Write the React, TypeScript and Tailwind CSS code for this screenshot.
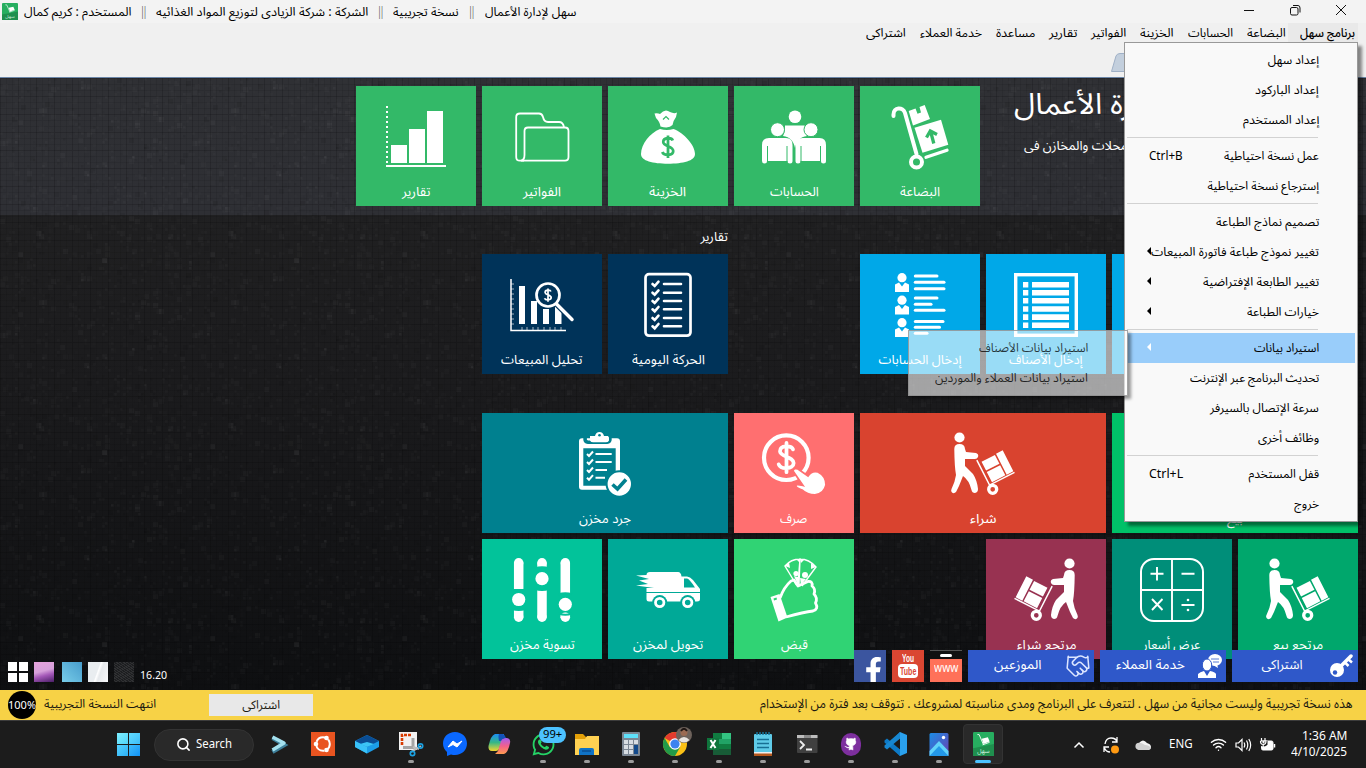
import { useLayoutEffect, useRef, useState, type ReactNode } from "react";
import { Github, Wifi, Search, Handshake } from "lucide-react";
import { FaFacebookF, FaWhatsapp } from "react-icons/fa";

/** Text stretched or squeezed horizontally to a known width. */
function Fit({ w, children, className = "", ltr = false }: { w: number; children: ReactNode; className?: string; ltr?: boolean }) {
  const ref = useRef<HTMLSpanElement>(null);
  const [scale, setScale] = useState(1);
  useLayoutEffect(() => {
    if (ref.current && ref.current.offsetWidth) setScale(w / ref.current.offsetWidth);
  }, [w]);
  return (
    <span className={`inline-flex shrink-0 ${className}`} style={{ width: w }}>
      <span
        ref={ref}
        className={`inline-block shrink-0 whitespace-nowrap ${ltr ? "origin-left" : "origin-right"}`}
        style={{ transform: `scaleX(${scale})` }}
      >
        {children}
      </span>
    </span>
  );
}

const Svg = ({ children }: { children: ReactNode }) => (
  <svg viewBox="0 0 64 64" className="h-16 w-16 overflow-visible" fill="none" stroke="none">
    {children}
  </svg>
);

const DOLLAR = "M5 -6 C4 -9 -5 -9.500 -5 -4.500 C-5 0 5.500 -0.500 5.500 4.500 C5.500 9.500 -4.500 9.500 -6 5.500 M0 -11 V11.500";

const Trolley = () => (
  <Svg>
    <path d="M5.500 11V9.500C5.500 2 15 1.500 17 8L28.500 49" stroke="#fff" strokeWidth="4" strokeLinecap="round" />
    <circle cx="28.500" cy="57" r="5.500" stroke="#fff" strokeWidth="4" />
    <path d="M38 52.300L59 45.300" stroke="#fff" strokeWidth="3.300" strokeLinecap="round" />
    <path d="M26.500 22.700L53 14.700L60.300 39.700L34.500 47.700Z" fill="#fff" />
    <path d="M20.700 6L27.500 3.500L29.500 8.800L33 7.500L31.500 2L36.700 0L42 14L25 20.500Z" fill="#fff" />
    <path d="M45.800 38.500L42.500 26M38.500 32.500L42.300 26L49 29.500" stroke="#33b968" strokeWidth="3.300" />
  </Svg>
);

const People = () => (
  <Svg>
    <path d="M23 20.500H42.500C45 24 44 30 45 31C38 31.500 34 37 33 43C32 37 28 31.500 21 31C23 27 23 24 23 20.500Z" fill="#fff" />
    <g fill="#fff">
      <circle cx="33" cy="11.700" r="6.300" />
      <circle cx="15.500" cy="24.700" r="7" stroke="#33b968" />
      <circle cx="49" cy="24.700" r="7" stroke="#33b968" />
      <path d="M7 33H24Q30.500 33 30.500 40V56Q30.500 58.500 28 58.500T25.500 56H5Q5 58.500 2.500 58.500T0 56V40Q0 33 7 33Z" />
      <path d="M40.500 33H57.500Q64 33 64 40V56Q64 58.500 61.500 58.500T59 56H38.500Q38.500 58.500 36 58.500T33.500 56V40Q33.500 33 40.500 33Z" />
    </g>
    <path d="M5.500 41V57M25 41V57M39 41V57M58.500 41V57" stroke="#33b968" />
  </Svg>
);

const Bag = () => (
  <Svg>
    <path d="M18.500 8.500Q22 8 24 9Q29 3 34 7Q38 9 41 7.500L40 12Q37 16 36.500 20Q33 24 24.500 21.500Q24 17 20 13Z" fill="#fff" />
    <path d="M27 14.500L30 11.500L33 14.500" stroke="#33b968" strokeWidth="1.200" />
    <path d="M24 24Q31 26 37.500 24C48 28 59 40 59 49C59 56 47 58.700 32 58.700S5 56 5 49C5 39 14 28 24 24Z" fill="#fff" />
    <path d={DOLLAR} transform="translate(32 41.500) scale(.95 1)" stroke="#33b968" strokeWidth="2.900" />
  </Svg>
);

const Folder = () => (
  <Svg>
    <g stroke="#fff" strokeWidth="1.800">
      <path d="M14 55.700H10Q6.200 55.700 6.200 52V12Q6.200 8.500 10 8.500H29Q32 8.500 33 12Q34 17 38 17H49Q53 17 54 22" />
      <path d="M11 55.700Q14.500 55 14.500 50V26Q14.500 22.500 18 22.500H55Q58.500 22.500 58.500 26V52Q58.500 55.700 55 55.700Z" />
    </g>
  </Svg>
);

const Bars = () => (
  <Svg>
    <path d="M3 1V58" stroke="#fff" strokeWidth="2" strokeDasharray="2 3" />
    <path d="M7 40H23V58H7ZM25 24H41V58H25ZM43 6H59V58H43ZM2 60H62V62H2Z" fill="#fff" />
  </Svg>
);

const TableList = () => (
  <Svg>
    <rect x="1.700" y="1.700" width="60.600" height="60.600" stroke="#fff" strokeWidth="3.400" />
    {[9, 17, 25, 33.200, 41.300, 49.500].map((y) => (
      <path key={y} d={`M9 ${y}h5.300v5.600h-5.300zM18 ${y}h37v5.600h-37z`} fill="#fff" />
    ))}
  </Svg>
);

const ContactList = () => (
  <Svg>
    {[[3, 49], [9.300, 56], [15.700, 56], [25, 49], [31.300, 43], [37.300, 56], [48.600, 55], [54.300, 51.500], [60.300, 39]].map(([y, x]) => (
      <path key={y} d={`M27.300 ${y}H${x}`} stroke="#fff" strokeWidth="3" strokeLinecap="round" />
    ))}
    {[0, 22.500, 45].map((y) => (
      <g key={y} transform={`translate(0 ${y})`}>
        <circle cx="14" cy="4.700" r="4.600" fill="#fff" />
        <path d="M7 19V11.500L11 9.500L14 13.500L17 9.500L21 11.500V19Z" fill="#fff" />
      </g>
    ))}
  </Svg>
);

const Checklist = () => (
  <Svg>
    <rect x="9.500" y="1.200" width="45" height="61.500" rx="3.500" stroke="#fff" strokeWidth="2.700" />
    {[11, 19.700, 28, 36.300, 45, 53.300].map((y) => (
      <path key={y} d={`M16.500 ${y}L18.700 ${y + 2}L22.500 ${y - 2.300}M28 ${y}H45`} stroke="#fff" strokeWidth="2.600" strokeLinecap="round" />
    ))}
  </Svg>
);

const Analysis = () => (
  <Svg>
    <path d="M1 6V57.500H56" stroke="#fff" strokeWidth="1.500" />
    <path d="M1 11H4M1 16H4M1 21H4M1 26H4M1 31H4M1 36H4M1 41H4M1 46H4M1 51H4M12 57V54M17 57V54M23 57V54M28 57V54M34 57V54M40 57V54M45 57V54M51 57V54" stroke="#fff" strokeWidth=".8" opacity=".8" />
    <path d="M9 13H15V51H9ZM21 28H27V51H21ZM33 36H39V51H33ZM45 33H51.500V51H45Z" fill="#fff" />
    <path d="M46.500 31L62 46.500" stroke="#003359" strokeWidth="6" />
    <path d="M46.500 31L62 46.500" stroke="#fff" strokeWidth="3.500" strokeLinecap="round" />
    <circle cx="38" cy="22" r="11.500" stroke="#fff" strokeWidth="2.700" fill="#003359" />
    <path d={DOLLAR} transform="translate(38 22) scale(.58)" stroke="#fff" strokeWidth="3" />
  </Svg>
);

const Clipboard = () => (
  <Svg>
    <path fillRule="evenodd" d="M9 6.300H44Q47 6.300 47 9.300V57.700H9Q6 57.700 6 54.700V9.300Q6 6.300 9 6.300ZM10.300 16.300V53.700H42.700V16.300Z" fill="#fff" />
    <path d="M15 3.500H22Q23 0 26.500 0T31 3.500H35Q37 4 37 7T34 10.300H15Q12 10 12 7T15 3.500Z" stroke="#00808f" strokeWidth="3.500" />
    <path d="M17 4H22Q23 0 26.500 0T31 4H35Q36 5 36 7T34 10H19Q17 9 17 7T17 4Z" fill="#fff" />
    <path d="M20 7.300H33" stroke="#fff" strokeWidth="6" strokeLinecap="round" />
    <circle cx="26.500" cy="3.300" r="1.300" fill="#00808f" />
    {[[22, 38.700], [30, 38.700], [38, 34], [45.700, 32]].map(([y, x]) => (
      <path key={y} d={`M14 ${y}l2 2l4-4.500M22.500 ${y}H${x}`} stroke="#fff" strokeWidth="2" />
    ))}
    <circle cx="46.300" cy="52" r="12.700" fill="#fff" stroke="#00808f" strokeWidth="2" />
    <path d="M39.500 52.500L44.500 57L53 47.500" stroke="#00808f" strokeWidth="3.600" />
  </Svg>
);

const PayHand = () => (
  <Svg>
    <circle cx="24.300" cy="25.700" r="22.300" stroke="#fff" strokeWidth="4.200" />
    <path d={DOLLAR} transform="translate(24.500 25.200) scale(1.300)" stroke="#fff" strokeWidth="2.900" strokeLinecap="round" />
    <path d="M31 39Q32 35.500 36 37L46 44Q50 38 56 40Q64 44 64 53Q62 62 53 63Q45 63 40 58Q33 56 34 53Q35 52 41 53.500Z" fill="#fff" stroke="#ff6f70" strokeWidth="1.800" />
  </Svg>
);

const Sliders = () => (
  <Svg>
    <g stroke="#fff" strokeWidth="9.500">
      <path d="M8.700 4.500V31M8.700 52V59.500M32 4.500V10M32 31V59.500M55.300 4.500V36M55.300 57V60" />
    </g>
    <g fill="#fff">
      <circle cx="8.700" cy="41.500" r="6.600" /><circle cx="32" cy="20.700" r="6.600" /><circle cx="55.300" cy="46.300" r="6.600" />
      <circle cx="8.700" cy="4.750" r="4.750" /><circle cx="32" cy="4.750" r="4.750" /><circle cx="55.300" cy="4.750" r="4.750" />
      <circle cx="8.700" cy="59.200" r="4.750" /><circle cx="32" cy="59.200" r="4.750" /><circle cx="55.300" cy="59.200" r="4.750" />
    </g>
    <path d="M2 31.500Q8.700 33.500 15.500 31.500M2 51Q8.700 53 15.500 51M25 10.300Q32 8 39 10.300M25 31Q32 33 39 31M48.500 36.300Q55.300 34 62 36.300M48.500 55.500Q55.300 58 62 55.500" stroke="#02c39a" strokeWidth="2" />
  </Svg>
);

const Van = () => (
  <Svg>
    <path d="M10.500 17Q10.500 14 14 14H42Q45 14 45.500 18.500H51Q54 18.500 57 22L64 31V41Q64 43.500 61 43.500H13Q10.500 43.500 10.500 41V30H18L0 27.500L12 26L3 22.500L13 21L0 17.500Z" fill="#fff" />
    <path d="M48 20.500H51Q53 20.500 59 29.500H48Z" fill="#00a997" />
    <path d="M10 34.500H64" stroke="#00a997" strokeWidth="1.200" />
    {[23.700, 51.700].map((x) => (
      <g key={x}><circle cx={x} cy="44.500" r="7.500" fill="#00a997" /><circle cx={x} cy="44.500" r="4.200" stroke="#fff" strokeWidth="2.800" /></g>
    ))}
  </Svg>
);

const CashFist = () => (
  <Svg>
    <path d="M34.500 27L23 8Q29 1 38 1L37 26M36 26L38 1Q47 1 54 9L40 28" stroke="#fff" strokeWidth="1.400" />
    <path d="M23 8L27 4L28 10ZM34 1H38V5ZM38 1H43L39 5ZM54 9L49 5L49 11Z" fill="#fff" />
    <circle cx="34" cy="15.500" r="2.600" fill="#fff" /><circle cx="43" cy="17" r="3" fill="#fff" />
    <path d="M32 18L36 19L36 27ZM38 20L44 21L39 27Z" fill="#fff" />
    <path d="M18 40Q22 29 29 23L32 22L36 28L46 23.500Q51 23 50 28Q54 31 52 36Q56 40 53.500 45Q57 51 51 53Q42 54 24 59" stroke="#fff" strokeWidth="2.800" strokeLinejoin="round" />
    <path d="M8.500 39L17.500 36L25.500 59.500L16.500 63.500Z" fill="#fff" />
    <path d="M11.500 40.500L14.500 39.500L15 41.500L12 42.500Z" fill="#30d374" />
  </Svg>
);

const ManCart = ({ flip = false }: { flip?: boolean }) => (
  <Svg>
    <g transform={flip ? "translate(64 0) scale(-1 1)" : undefined}>
      <circle cx="8.500" cy="5.500" r="5.100" fill="#fff" />
      <path d="M3.300 17Q3.300 12 8.500 12T14 17L15 20L25 21Q28 22 27 25Q26 27.500 23 27L14 27V34L22 42Q26 48 27 57Q27 60.500 24 61Q21 61 20.500 58Q18 48 12 44L8 54L5 60Q3 62 1 60.500Q-.5 59 .5 57Q4 50 5 43Q3.500 35 3.300 17Z" fill="#fff" />
      <g transform="translate(39 54) rotate(-27)">
        <path d="M0 -29V-1H28" stroke="#fff" strokeWidth="1.500" />
        <path d="M3.500 -25.500H18.500V-15.500H3.500ZM3.500 -14H18.500V-2.500H3.500ZM20 -26H27.500V-2.500H20Z" fill="#fff" />
      </g>
      <circle cx="41.700" cy="57.300" r="4" stroke="#fff" strokeWidth="3.300" />
    </g>
  </Svg>
);

const Calc = () => (
  <Svg>
    <rect x="1" y="1" width="62" height="62" rx="13" stroke="#fff" strokeWidth="2" />
    <path d="M32 1V63M1 32H63M10.500 15.700H23.500M17 9V22.500M41.500 15.700H54.500M12 41L22.500 52M22.500 41L12 52M41.500 47H54.500" stroke="#fff" strokeWidth="1.900" />
    <circle cx="48" cy="42" r="1.300" fill="#fff" /><circle cx="48" cy="52" r="1.300" fill="#fff" />
  </Svg>
);

function Tile({ bg, label, w = 0, icon, span = false }: { bg: string; label?: string; w?: number; icon?: ReactNode; span?: boolean }) {
  return (
    <div className={`flex h-[120px] flex-col items-center pt-[19px] text-white ${bg} ${span ? "col-span-2" : ""}`}>
      <div className="h-16 w-16">{icon}</div>
      {label && <Fit w={w} className="mt-[11px] h-6 items-center text-[13px] leading-6">{label}</Fit>}
    </div>
  );
}

/** Woven texture of the window background, from a repeatable pseudo-random sequence. */
const CELLS = (() => {
  let s = 7;
  const rnd = () => (s = (s * 16807) % 2147483647) / 2147483647;
  return Array.from({ length: 900 }, () => {
    const z = rnd() > 0.7 ? 5 : 2.5;
    return [Math.floor(rnd() * 64) * 3, Math.floor(rnd() * 64) * 3, z, rnd() * 0.028, rnd() > 0.35 ? "#fff" : "#000"] as const;
  });
})();

const Texture = () => (
  <svg className="absolute inset-0 h-full w-full">
    <defs>
      <pattern id="weave" width="192" height="192" patternUnits="userSpaceOnUse">
        {CELLS.map(([x, y, z, o, c], i) => (
          <rect key={i} x={x} y={y} width={z} height={z} fill={c} opacity={c === "#000" ? o * 3 : o} />
        ))}
        {Array.from({ length: 32 }, (_, i) => (
          <path key={i} d={`M${i * 6 + 0.5} 0V192M0 ${i * 6 + 0.5}H192`} stroke="#000" opacity={i % 3 ? 0.08 : 0.16} />
        ))}
      </pattern>
    </defs>
    <rect width="100%" height="100%" fill="url(#weave)" />
  </svg>
);

const topMenu: [string, number][] = [
  ["البضاعة", 39], ["الحسابات", 45], ["الخزينة", 34], ["الفواتير", 35],
  ["تقارير", 28], ["مساعدة", 39], ["خدمة العملاء", 62], ["اشتراكى", 40],
];

type Item = { t: string; w: number; k?: string; arrow?: boolean; on?: boolean } | null;
const menu: Item[] = [
  { t: "إعداد سهل", w: 51 }, { t: "إعداد الباركود", w: 64 }, { t: "إعداد المستخدم", w: 76 }, null,
  { t: "عمل نسخة احتياطية", w: 95, k: "Ctrl+B" }, { t: "إسترجاع نسخة احتياطية", w: 112 }, null,
  { t: "تصميم نماذج الطباعة", w: 103 }, { t: "تغيير نموذج طباعة فاتورة المبيعات", w: 168, arrow: true },
  { t: "تغيير الطابعة الإفتراضية", w: 116, arrow: true }, { t: "خيارات الطباعة", w: 72, arrow: true }, null,
  { t: "استيراد بيانات", w: 65, arrow: true, on: true }, { t: "تحديث البرنامج عبر الإنترنت", w: 129 },
  { t: "سرعة الإتصال بالسيرفر", w: 109 }, { t: "وظائف أخرى", w: 61 }, null,
  { t: "قفل المستخدم", w: 71, k: "Ctrl+L" }, { t: "خروج", w: 25 },
];

function SahlLogo({ className }: { className: string }) {
  return (
    <svg viewBox="0 0 24 28" preserveAspectRatio="none" className={className}>
      <rect width="24" height="28" rx="1.500" fill="#27ae60" />
      <path d="M0 19L24 14V28H0Z" fill="#1f8f4e" />
      <path d="M5 3L7 3L12 15M11 15L19 12" stroke="#fff" fill="none" />
      <path d="M10 8L17 6L19 11L12 14Z" fill="#fff" />
      <text x="12" y="25" fontSize="7" textAnchor="middle" fill="#d7f3e1">سهل</text>
    </svg>
  );
}

const Sep = () => <Fit w={5} className="text-[12px] font-semibold text-[#222]">||</Fit>;

function FooterButton({ t, w, children }: { t: string; w: number; children: ReactNode }) {
  return (
    <div className="flex h-8 w-[126px] items-center bg-[#2f58c9] text-white">
      <div className="flex w-8 shrink-0 items-center justify-center">{children}</div>
      <div className="flex w-[88px] justify-center"><Fit w={w} className="text-[13px]">{t}</Fit></div>
    </div>
  );
}

function App_({ children, dot = true }: { children: ReactNode; dot?: boolean }) {
  return (
    <div className="relative flex h-12 w-11 shrink-0 flex-col items-center">
      <div className="flex h-[47px] items-center">{children}</div>
      {dot && <span className="absolute bottom-[6px] h-[3px] w-1.5 rounded-full bg-[#9b9b9b]" />}
    </div>
  );
}

const I = ({ children }: { children: ReactNode }) => (
  <svg viewBox="0 0 24 24" className="h-6 w-6 overflow-visible" fill="none">{children}</svg>
);

function Taskbar() {
  return (
    <div dir="ltr" className="flex h-12 items-center border-t border-[#3c3c3c] bg-[#1c1c1c] text-white">
      <div className="ml-[117px] grid h-[23px] w-[23px] grid-cols-2 gap-px">
        <span className="bg-gradient-to-br from-[#7df0ff] to-[#4fd3fa]" /><span className="bg-gradient-to-br from-[#62dcff] to-[#3cbcf8]" />
        <span className="bg-gradient-to-br from-[#55d2ff] to-[#2ab0f6]" /><span className="bg-gradient-to-br from-[#3dbbfb] to-[#0f92f5]" />
      </div>
      <div className="ml-3.5 flex h-8 w-[100px] items-center rounded-full border border-[#333] bg-[#292929] pl-[21px]">
        <Search className="h-[15px] w-[15px]" strokeWidth={2.5} />
        <Fit ltr w={36} className="ml-[5px] pt-px text-[12px]">Search</Fit>
      </div>
      <div className="ml-[3px] flex">
        <App_ dot={false}><I><path d="M6 5L18 12L6 19" stroke="#3d7e99" strokeWidth="4" transform="translate(-.5 1)" /><path d="M5.500 5L17 11L5.500 18" stroke="#a3e0ee" strokeWidth="3.500" strokeLinejoin="round" /></I></App_>
        <App_ dot={false}><I><path d="M0 0H24V24H0Z" fill="#e95420" /><circle cx="12" cy="12" r="6.800" stroke="#fff" strokeWidth="2" strokeDasharray="11.200 3" strokeDashoffset="5" /><circle cx="5" cy="12" r="2.300" fill="#fff" /><circle cx="15.500" cy="6" r="2.300" fill="#fff" /><circle cx="15.500" cy="18" r="2.300" fill="#fff" /></I></App_>
        <App_ dot={false}><I><path d="M0 9L12 3L24 9V15L12 21.500L0 15Z" fill="#1b9de8" /><path d="M12 3L24 9L12 15L0 9Z" fill="#0a4d94" /><path d="M12 10L19 12L12 15L5 12Z" fill="#3cc5f6" /><path d="M0 9L12 15V21.500L0 15Z" fill="#39c2f8" /></I></App_>
        <App_><I><path d="M0 0H18V18H0Z" fill="#f2f2f2" /><path d="M3 13V3H12" stroke="#d83b01" strokeWidth="2.600" strokeDasharray="3 1" /><path d="M4 15.500H14V6" stroke="#a5a5a5" strokeWidth="3" /><path d="M12 20L22 14M14 15L20 17" stroke="#bbb" strokeWidth="2" /><circle cx="21.500" cy="14" r="2.200" stroke="#1aa1e2" strokeWidth="1.700" /><circle cx="13.500" cy="21.500" r="2.200" stroke="#1aa1e2" strokeWidth="1.700" /></I></App_>
        <App_ dot={false}><I><path d="M12 0C5 0 0 5 0 11.500C0 15 1.500 18 4 20V24L8 22.500Q10 23 12 23C19 23 24 18 24 11.500S19 0 12 0Z" fill="#0a68ff" /><path d="M5 15L10 9L14 12L19 9L14 15L10 12.500Z" fill="#fff" stroke="#fff" strokeLinejoin="round" /></I></App_>
        <App_ dot={false}><I>
          <defs><linearGradient id="cpa" x2="0" y2="1"><stop stopColor="#1c8ff5" /><stop offset=".5" stopColor="#35b787" /><stop offset="1" stopColor="#f3d52e" /></linearGradient><linearGradient id="cpb" x2="0" y2="1"><stop stopColor="#a65cf0" /><stop offset=".5" stopColor="#f2608c" /><stop offset="1" stopColor="#ff9b4f" /></linearGradient></defs>
          <path d="M8 2H17L12 17Q11 19 9 19H5Q1 19 1.500 14Q4 3 8 2Z" fill="url(#cpa)" /><path d="M17 22H8L11 19L14 9Q15 6 18 6H20Q24 7 23 11Q21 21 17 22Z" fill="url(#cpb)" /><path d="M12 2H16Q18 3 19 6Q15 6 14 9L12 9Q11 4 12 2Z" fill="#1452b8" />
        </I></App_>
        <App_><div className="relative"><FaWhatsapp className="h-[25px] w-[25px] text-[#25d366]" /><span className="absolute -top-[5px] left-2 flex h-4 w-[27px] items-center justify-center rounded-full bg-[#4cc2ff] text-black"><Fit ltr w={19} className="text-[10px]">99+</Fit></span></div></App_>
        <App_><I><path d="M0 2H8L11 5H24V23H0Z" fill="#e3a008" /><path d="M0 7H10L12 4H24V23H0Z" fill="#ffd152" /><path d="M4 23V18Q4 16 6 16H17Q19 16 19 18V23Z" fill="#1073c6" /><path d="M7 19H16" stroke="#0a4e92" strokeWidth="1.500" /></I></App_>
        <App_><I><rect x="3" y="0" width="18" height="24" rx="1" fill="#7b8794" /><path d="M5 2H19V6H5Z" fill="#5ee0fa" /><path d="M5 8H9V12H5ZM10 8H14V12H10ZM15 8H19V12H15ZM5 13H9V17H5ZM10 13H14V17H10ZM5 18H9V22H5ZM10 18H14V22H10Z" fill="#d7dde3" /><path d="M15 13H19V22H15Z" fill="#124a8c" /></I></App_>
        <App_><I><circle cx="12" cy="12" r="12" fill="#fbc116" /><path d="M12 12L1.600 6A12 12 0 0 1 22.400 6Z" fill="#e33b2e" /><path d="M1.600 6A12 12 0 0 0 12 24L17.200 15L6.800 15Z" fill="#229a48" /><circle cx="12" cy="12" r="5.800" fill="#fff" /><circle cx="12" cy="12" r="4.600" fill="#3b82f0" /><circle cx="21" cy="3" r="8" fill="#6d625b" /><circle cx="21" cy="0.500" r="3.500" fill="#9a6a52" /><path d="M15.500 8Q21 2 26.500 8Q21 13 15.500 8" fill="#e8e4e0" /><path d="M18 -1Q21 -5.500 24 -1" stroke="#1d1512" strokeWidth="1.800" /></I></App_>
        <App_><I><path d="M6 1H24V23H6Z" fill="#21a366" /><path d="M6 1H15V7H6ZM6 12H24V17H6Z" fill="#107c41" /><path d="M15 1H24V7H15Z" fill="#33c481" /><path d="M6 17H24V23H6Z" fill="#185c37" /><path d="M0 6H12V18H0Z" fill="#0f753c" /><path d="M3.500 8L8.500 16M8.500 8L3.500 16" stroke="#fff" strokeWidth="2" /></I></App_>
        <App_><I><rect x="3" y="2" width="18" height="22" rx="1" fill="#5fcbe8" /><path d="M3 21H21V24H3Z" fill="#b5571c" /><path d="M3 20H21V21.500H3Z" fill="#eee" /><path d="M6 0V3M9 0V3M12 0V3M15 0V3M18 0V3" stroke="#16769c" strokeWidth="1.500" /><path d="M6 7.500H18M6 11.500H18M6 15.500H18" stroke="#176f94" strokeWidth="1.500" /></I></App_>
        <App_><I><rect x="2" y="3" width="20.500" height="18" rx="1" fill="#404040" /><path d="M2 3H22.500V6H2Z" fill="#bdbdbd" /><path d="M9 3H16V6H9Z" fill="#8a8a8a" /><path d="M5 9L9 13L5 17M11 17.500H17" stroke="#eee" strokeWidth="1.800" /></I></App_>
        <App_><span className="flex h-[23px] w-[20px] items-center justify-center rounded-full bg-[#7d2f9e]"><Github className="h-3.5 w-3.5 fill-white" strokeWidth={1.5} /></span></App_>
        <App_><I><path d="M17 0L24 3V21L17 24L6 12Z" fill="#2aa1ee" /><path d="M17 6L9 12L17 18Z" fill="#1c1c1c" /><path d="M1.500 8.500L4 6.500L17 17.500V24L1.500 10.500Z" fill="#0d7ac7" /><path d="M1.500 15.500L4 17.500L17 6.500V0L1.500 13.500Z" fill="#1787d1" /></I></App_>
        <App_><I><defs><linearGradient id="ph" x2="1" y2="1"><stop stopColor="#1b8de6" /><stop offset="1" stopColor="#6b3fb0" /></linearGradient></defs><rect x="2.500" y="1" width="19" height="23" rx="1.500" fill="url(#ph)" /><path d="M2.500 19L12 9L21.500 19V24H2.500Z" fill="#60d3fa" /><path d="M2.500 24L12 14L21.500 24Z" fill="#2398e8" /><circle cx="16.500" cy="5.500" r="1.700" fill="#fff" /></I></App_>
        <div className="relative flex h-12 w-11 items-center justify-center pb-0.5">
          <div className="flex h-10 w-[40px] items-center justify-center rounded border border-[#333] bg-[#292929]"><SahlLogo className="h-6 w-[21px]" /></div>
          <span className="absolute bottom-[6px] h-[3px] w-4 rounded-full bg-[#4cc2ff]" />
        </div>
      </div>
      <div className="ml-auto mr-[19px] flex items-center">
        <svg viewBox="0 0 12 12" className="mr-[18px] h-3 w-3"><path d="M1.500 8.500L6 4L10.500 8.500" fill="none" stroke="#fff" strokeWidth="1.500" /></svg>
        <svg viewBox="0 0 17 18" className="mr-[15px] h-[18px] w-[17px]"><path d="M2 8Q3 2 8 2Q13 2 14 6M14 1V6H9M1 16V11H6M1.500 12Q3 16 7 16" fill="none" stroke="#fff" strokeWidth="1.300" /><circle cx="12" cy="13.500" r="4" fill="#ff9a12" /></svg>
        <svg viewBox="0 0 16 12" className="mr-[18px] h-3 w-4"><path d="M4 11A4 4 0 0 1 4 4Q8 -1 12 4Q16 5 16 8T13 11Z" fill="#f2f2f2" /><path d="M1 5Q4 2 10 6Q14 6 16 9L13 11H4Q-1 10 1 5Z" fill="#d0d0d0" /></svg>
        <Fit ltr w={24} className="mr-[17px] pt-px text-[12px]">ENG</Fit>
        <Wifi className="mr-2 h-[17px] w-[17px]" strokeWidth={2} />
        <svg viewBox="0 0 17 16" className="mr-[7px] h-4 w-[17px]" fill="none" stroke="#fff" strokeWidth="1.200"><path d="M1 6H3.500L7 2.500V13.500L3.500 10H1ZM9 5.500Q10.500 8 9 10.500M11.500 3.500Q14 8 11.500 12.500M13.800 2Q17.500 8 13.800 14" /></svg>
        <svg viewBox="0 0 16 14" className="mr-4 h-3.5 w-4 overflow-visible"><rect x="2.500" y="3" width="11.500" height="9" rx="1.500" fill="#fff" stroke="#fff" /><path d="M15.500 6V9.500" stroke="#fff" strokeWidth="1.500" /><path d="M2 3V6Q4.500 8 7 6V3" stroke="#1c1c1c" strokeWidth="3" fill="none" /><path d="M2.500 0V3M6 0V3M1.500 3H7Q7 6.500 4.200 6.500T1.500 3M4.200 6.500V10" stroke="#fff" strokeWidth="1.200" fill="none" /></svg>
        <div className="flex w-[56px] flex-col items-end text-[12px] leading-4">
          <Fit ltr w={45}>1:36 AM</Fit>
          <Fit ltr w={56}>4/10/2025</Fit>
        </div>
      </div>
    </div>
  );
}

export default function App() {
  return (
    <div dir="rtl" className="relative flex h-[768px] w-[1366px] flex-col overflow-hidden bg-[#f0f0f0] font-['Noto_Sans_Arabic','Noto_Sans','DejaVu_Sans',sans-serif] text-[12px] text-black">
      <header className="flex h-[23px] items-center justify-between bg-[#f3f3f3]">
        <div className="flex items-center gap-[36px] pb-1 pr-5">
          <svg viewBox="0 0 10 10" className="h-2.5 w-2.5"><path d="M0 0L10 10M10 0L0 10" stroke="#111" /></svg>
          <svg viewBox="0 0 10 10" className="h-2.5 w-2.5 overflow-visible" fill="none" stroke="#111"><rect x=".5" y="2.500" width="7.500" height="7.500" rx="1.500" /><path d="M3 .500H8Q10 .500 10 3V7.500" /></svg>
          <svg viewBox="0 0 10 10" className="h-2.5 w-2.5"><path d="M0 5.500H10" stroke="#111" /></svg>
        </div>
        <div className="flex items-center gap-2.5 pl-[2px]">
          <div className="flex items-center gap-2.5 pt-0.5">
            <Fit w={92}>سهل لإدارة الأعمال</Fit><Sep />
            <Fit w={66}>نسخة تجريبية</Fit><Sep />
            <Fit w={212}>الشركة : شركة الزيادى لتوزيع المواد الغذائيه</Fit><Sep />
            <Fit w={107}>المستخدم : كريم كمال</Fit>
          </div>
          <SahlLogo className="-mr-1 h-[17px] w-4" />
        </div>
      </header>
      <nav className="flex h-[20px] shrink-0 items-center gap-3.5 pr-2">
        <div className="-ml-[12px] flex h-full w-[70px] items-center bg-[#e9e9e9] pr-[3px] pt-0.5"><Fit w={55} className="font-medium leading-5">برنامج سهل</Fit></div>
        {topMenu.map(([t, w]) => <Fit key={t} w={w} className="pt-0.5 leading-5">{t}</Fit>)}
      </nav>
      <div className="flex h-[35px] shrink-0 items-start border-b border-[#6b86a8] pr-[130px] pt-[10px]">
        <svg viewBox="0 0 125 19" className="h-[19px] w-[125px]"><path d="M.5 18.500L5 3Q6 .5 9 .5H125V18.500Z" fill="#c3cfdd" stroke="#9fb0c6" /></svg>
      </div>

      <main className="relative h-[612px] shrink-0 bg-gradient-to-b from-[#242425] via-[#1b1b1d] to-[#0e0f11] text-white">
        <div className="h-[137px] bg-gradient-to-b from-[#2f3034] to-[#2e2f34]" />
        <Texture />
        <div className="absolute inset-0 px-2">
          <div className="flex h-[137px] gap-1.5 pt-2">
            <div className="flex w-[372px] flex-col items-end pl-7">
              <Fit w={228} className="h-[38px] items-center text-[29px] leading-[38px]">سهل لإدارة الأعمال</Fit>
              <Fit w={136} className="ml-2.5 mt-[11px] h-6 items-center text-[13px]">إدارة المحلات والمخازن فى</Fit>
            </div>
            <div className="grid grid-cols-[repeat(5,120px)] gap-1.5">
              <Tile bg="bg-[#33b968]" label="البضاعة" w={40} icon={<Trolley />} />
              <Tile bg="bg-[#33b968]" label="الحسابات" w={49} icon={<People />} />
              <Tile bg="bg-[#33b968]" label="الخزينة" w={37} icon={<Bag />} />
              <Tile bg="bg-[#33b968]" label="الفواتير" w={38} icon={<Folder />} />
              <Tile bg="bg-[#33b968]" label="تقارير" w={29} icon={<Bars />} />
            </div>
          </div>
          <div className="flex h-[39px] items-center pr-[630px] pt-[6px]"><Fit w={28} className="text-[13px]">تقارير</Fit></div>
          <div className="grid grid-cols-[repeat(7,120px)] gap-1.5">
            <Tile bg="bg-[#00a8e8]" />
            <Tile bg="bg-[#00a8e8]" />
            <Tile bg="bg-[#00a8e8]" label="إدخال الأصناف" w={74} icon={<TableList />} />
            <Tile bg="bg-[#00a8e8]" label="إدخال الحسابات" w={83} icon={<ContactList />} />
            <span />
            <Tile bg="bg-[#003359]" label="الحركة اليومية" w={73} icon={<Checklist />} />
            <Tile bg="bg-[#003359]" label="تحليل المبيعات" w={82} icon={<Analysis />} />
          </div>
          <div className="mt-[39px] grid grid-cols-[repeat(7,120px)] gap-1.5">
            <Tile span bg="bg-[#00c168]" label="بيع" w={16} icon={<ManCart />} />
            <Tile span bg="bg-[#d9432f]" label="شراء" w={26} icon={<ManCart />} />
            <Tile bg="bg-[#ff6f70]" label="صرف" w={27} icon={<PayHand />} />
            <Tile span bg="bg-[#00808f]" label="جرد مخزن" w={52} icon={<Clipboard />} />
            <Tile bg="bg-[#00a76c]" label="مرتجع بيع" w={50} icon={<ManCart />} />
            <Tile bg="bg-[#008e79]" label="عرض أسعار" w={57} icon={<Calc />} />
            <Tile bg="bg-[#983251]" label="مرتجع شراء" w={60} icon={<ManCart flip />} />
            <span />
            <Tile bg="bg-[#30d374]" label="قبض" w={27} icon={<CashFist />} />
            <Tile bg="bg-[#00a997]" label="تحويل لمخزن" w={70} icon={<Van />} />
            <Tile bg="bg-[#02c39a]" label="تسوية مخزن" w={65} icon={<Sliders />} />
          </div>
        </div>
        <div className="absolute inset-x-2 bottom-2 flex items-end justify-between">
          <div className="flex gap-1.5">
            <FooterButton t="اشتراكى" w={41}><svg viewBox="0 0 24 24" className="h-6 w-6"><path d="M9 14L21 2" stroke="#fff" strokeWidth="3.500" strokeLinecap="round" /><path d="M18 5L22 8.500M15 8.500L18.500 12" stroke="#fff" strokeWidth="2.500" /><circle cx="7" cy="16" r="7" fill="#fff" /><circle cx="5" cy="18.500" r="2.200" fill="#2f58c9" /></svg></FooterButton>
            <FooterButton t="خدمة العملاء" w={69}><svg viewBox="0 0 24 24" className="h-6 w-6"><ellipse cx="17" cy="6" rx="7" ry="6" fill="#fff" /><path d="M19 10L20 14L15 11Z" fill="#fff" /><path d="M13 5H21M15 8H21" stroke="#2f58c9" strokeWidth=".8" /><ellipse cx="9" cy="11" rx="4.700" ry="6" fill="#fff" stroke="#2f58c9" /><path d="M0 24V20Q2 18 6 17L9 22L12 17Q17 18 18 20V24Z" fill="#fff" /></svg></FooterButton>
            <FooterButton t="الموزعين" w={47}><Handshake className="h-[26px] w-[26px] text-[#dce5ff]" strokeWidth={1.4} /></FooterButton>
            <div className="flex h-8 w-8 flex-col items-center bg-[#ff7159]"><div className="flex h-[9px] w-full items-center justify-center border-t border-[#555] bg-[#111]"><span className="h-[3px] w-3 rounded-full bg-white" /></div><Fit w={24} className="mt-px text-[12px]">www</Fit></div>
            <div dir="ltr" className="flex h-8 w-8 flex-col items-center bg-[#da4632] pt-[3px] font-['Liberation_Sans_Narrow','Liberation_Sans',sans-serif] font-bold">
              <Fit ltr w={12} className="h-[11px] text-[11px] leading-[11px]">You</Fit>
              <span className="flex h-[14px] w-5 items-center justify-center rounded bg-white text-[#da4632]"><Fit ltr w={16} className="text-[11px] leading-3">Tube</Fit></span>
            </div>
            <div className="flex h-8 w-8 items-end justify-start overflow-hidden bg-[#3b559f] pr-1"><FaFacebookF className="-mb-1 h-[31px] w-[17px]" /></div>
          </div>
          <div dir="ltr" className="flex h-5 items-end">
            <div className="mr-1.5 grid h-5 w-5 grid-cols-2 gap-[2px]"><span className="bg-white" /><span className="bg-white" /><span className="bg-white" /><span className="bg-white" /></div>
            <span className="mr-2 h-5 w-5 bg-[linear-gradient(165deg,#e6a3dc,#d6a0da_45%,#a458b8_65%,#4a1e66)]" />
            <span className="mr-1.5 h-5 w-5 bg-gradient-to-bl from-[#479ccc] to-[#78cde8]" />
            <span className="mr-1.5 h-5 w-5 bg-[linear-gradient(110deg,#e9edf0_0_45%,#fff_50%,#e6e9ec_60%,#f8f8fa)]" />
            <span className="mr-1.5 h-5 w-5 bg-[repeating-linear-gradient(35deg,#1d1e20_0_1px,#303133_1px_2px)]" />
            <Fit ltr w={27} className="-mb-0.5 h-4 items-center text-[11px]">16.20</Fit>
          </div>
        </div>
      </main>

      <div className="flex h-[30px] shrink-0 items-center bg-[#f7d246] px-2 pr-[13px] text-[#1c1a10]">
        <Fit w={593} className="text-[13px]">هذه نسخة تجريبية وليست مجانية من سهل . لتتعرف على البرنامج ومدى مناسبته لمشروعك . تتوقف بعد فترة من الإستخدام</Fit>
        <div className="mr-auto flex h-[22px] w-[104px] items-center justify-center bg-[#e8e8e8] pt-0.5"><Fit w={38}>اشتراكى</Fit></div>
        <Fit w={112} className="mr-[53px]">انتهت النسخة التجريبية</Fit>
        <span dir="ltr" className="mr-2 flex h-7 w-7 items-center justify-center overflow-hidden rounded-full bg-black pt-0.5 text-white"><Fit ltr w={28} className="text-[11px]">100%</Fit></span>
      </div>
      <Taskbar />

      <div className="absolute left-[1124px] top-[42px] h-[480px] w-[234px] border border-[#999] bg-[#f9f9f9] p-[2px] shadow-[4px_4px_3px_rgba(0,0,0,0.45)]">
        {menu.map((m, i) =>
          m ? (
            <div key={i} className={`relative flex h-[30px] items-center pr-9 pt-0.5 ${m.on ? "bg-[#99cdfa]" : ""}`}>
              <Fit w={m.w}>{m.t}</Fit>
              {m.k && <span dir="ltr" className="absolute left-[22px]"><Fit ltr w={34}>{m.k}</Fit></span>}
              {m.arrow && <svg viewBox="0 0 4 8" className="absolute left-[20px] top-[10px] h-2 w-1"><path d="M4 0V8L0 4Z" fill={m.on ? "#fff" : "#000"} /></svg>}
            </div>
          ) : (
            <div key={i} className="flex h-1.5 items-start pr-[37px] pt-0.5"><span className="h-px w-full bg-[#d2d2d2]" /></div>
          ),
        )}
      </div>
      <div className="absolute left-[908px] top-[330px] h-[66px] w-[220px] border border-[#8d8d8d]/80 bg-white/60 pr-[39px] pt-[3px] shadow-[3px_3px_3px_rgba(0,0,0,0.4)]">
        <div className="flex h-[30px] items-center text-black/75"><Fit w={109}>استيراد بيانات الأصناف</Fit></div>
        <div className="flex h-[30px] items-center text-black/80"><Fit w={153}>استيراد بيانات العملاء والموردين</Fit></div>
      </div>
    </div>
  );
}
